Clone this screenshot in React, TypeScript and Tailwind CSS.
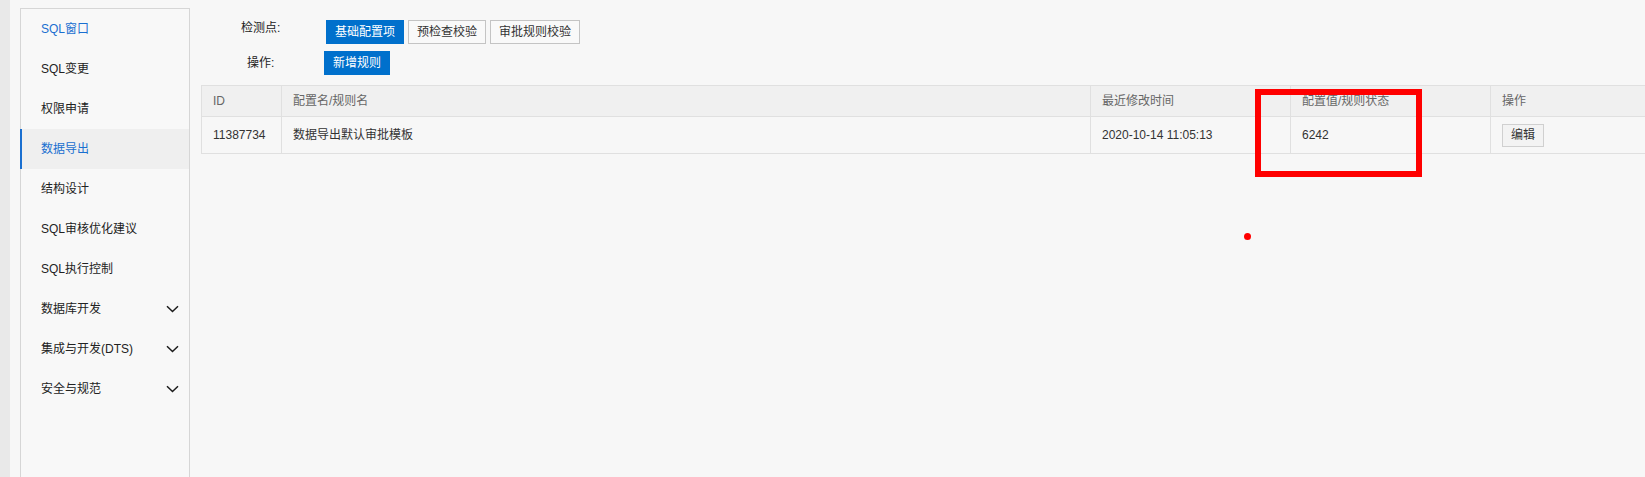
const menuItems = [
  { label: "SQL窗口", color: "text-[#1a6fd0]" },
  { label: "SQL变更" },
  { label: "权限申请" },
  { label: "数据导出", active: true },
  { label: "结构设计" },
  { label: "SQL审核优化建议" },
  { label: "SQL执行控制" },
  { label: "数据库开发", sub: true },
  { label: "集成与开发(DTS)", sub: true },
  { label: "安全与规范", sub: true },
];

const Chevron = () => (
  <svg width="13" height="8" viewBox="0 0 13 8" fill="none">
    <path d="M1 1.2l5.5 5.3 5.5-5.3" stroke="#1c1c1c" strokeWidth="1.5" />
  </svg>
);

const App = () => {
  return (
    <div
      className="relative flex h-[477px] w-full overflow-hidden bg-[#f7f7f7] text-[12px] text-[#333]"
      style={{ fontFamily: '"Liberation Sans", "Noto Sans CJK SC", sans-serif' }}
    >
      {/* left strip */}
      <div className="w-[10px] shrink-0 bg-[#e9e9e9]" />
      <div className="w-[10px] shrink-0" />

      {/* sidebar */}
      <div className="mt-[8px] w-[170px] shrink-0 border-x border-t border-[#d6d6d6] bg-[#f8f8f8]">
        {menuItems.map((item) => (
          <div
            key={item.label}
            className={
              item.active
                ? "-ml-px flex h-10 items-center border-l-2 border-[#1a6fd0] bg-[#efefef] pl-[19px] text-[#1a6fd0]"
                : `flex h-10 items-center justify-between pl-[20px] pr-[10px] ${item.color ?? "text-[#222]"}`
            }
          >
            <span>{item.label}</span>
            {item.sub && <Chevron />}
          </div>
        ))}
      </div>

      {/* main */}
      <div className="flex min-w-0 flex-1 flex-col">
        <div className="mt-[20px] flex items-start">
          <span className="ml-[51px] w-[85px] leading-[16px] text-[#222]">检测点:</span>
          <div className="flex gap-[4px]">
            <button className="h-[24px] bg-[#0070cc] px-[9px] text-white">基础配置项</button>
            <button className="h-[24px] border border-[#c4c4c4] bg-[#f9f9f9] px-[8px] text-[#333]">预检查校验</button>
            <button className="h-[24px] border border-[#c4c4c4] bg-[#f9f9f9] px-[8px] text-[#333]">审批规则校验</button>
          </div>
        </div>
        <div className="mt-[7px] flex items-center">
          <span className="ml-[57px] w-[77px] text-[#222]">操作:</span>
          <button className="h-[24px] bg-[#0070cc] px-[9px] text-white">新增规则</button>
        </div>

        {/* table */}
        <div className="ml-[11px] mt-[10px] border-y border-l border-[#e0e0e0]">
          <div className="flex h-[31px] items-center border-b border-[#e0e0e0] bg-[#f0f0f0] text-[#666]">
            <div className="flex h-full w-[80px] shrink-0 items-center border-r border-[#e0e0e0] pl-[11px]">ID</div>
            <div className="flex h-full w-[809px] shrink-0 items-center border-r border-[#e0e0e0] pl-[11px]">配置名/规则名</div>
            <div className="flex h-full w-[200px] shrink-0 items-center border-r border-[#e0e0e0] pl-[11px]">最近修改时间</div>
            <div className="flex h-full w-[200px] shrink-0 items-center border-r border-[#e0e0e0] pl-[11px]">配置值/规则状态</div>
            <div className="flex h-full flex-1 items-center pl-[11px]">操作</div>
          </div>
          <div className="flex h-[36px] items-center bg-[#f7f7f7] text-[#333]">
            <div className="flex h-full w-[80px] shrink-0 items-center border-r border-[#e0e0e0] pl-[11px]">11387734</div>
            <div className="flex h-full w-[809px] shrink-0 items-center border-r border-[#e0e0e0] pl-[11px]">数据导出默认审批模板</div>
            <div className="flex h-full w-[200px] shrink-0 items-center border-r border-[#e0e0e0] pl-[11px]">2020-10-14 11:05:13</div>
            <div className="flex h-full w-[200px] shrink-0 items-center border-r border-[#e0e0e0] pl-[11px]">6242</div>
            <div className="flex h-full flex-1 items-center pl-[11px]">
              <button className="h-[23px] border border-[#d0d0d0] bg-[#f3f3f3] px-[8px] text-[#333]">编辑</button>
            </div>
          </div>
        </div>
      </div>

      {/* annotation */}
      <div className="absolute left-[1255px] top-[89px] h-[88px] w-[167px] border-[6px] border-[#ff0000]" />
      <div className="absolute left-[1244px] top-[233px] h-[7px] w-[7px] rounded-full bg-[#ff0000]" />
    </div>
  );
};

export default App;
